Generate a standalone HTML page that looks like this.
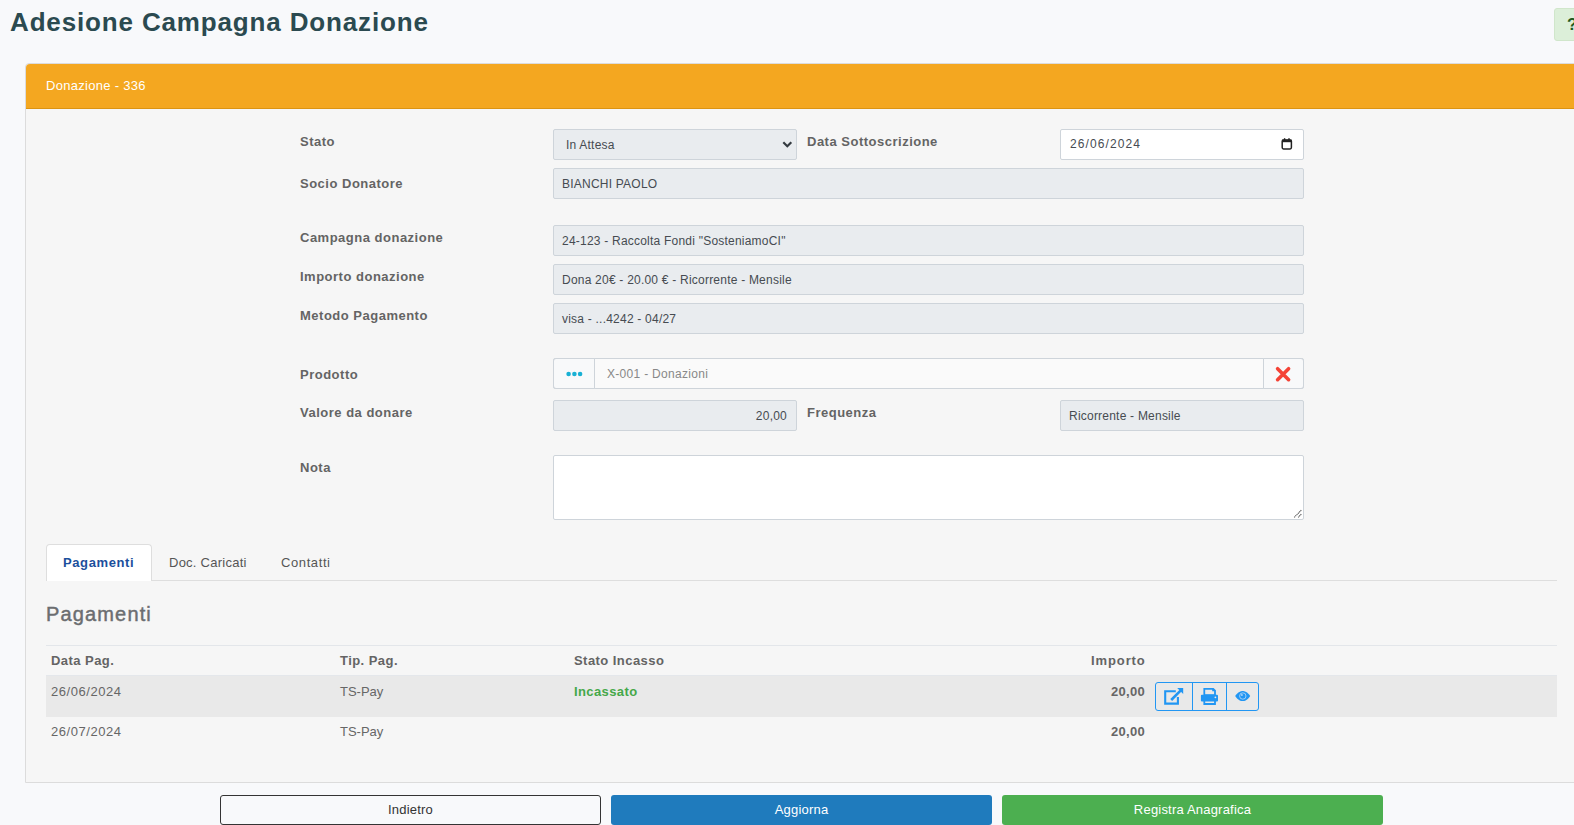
<!DOCTYPE html>
<html><head><meta charset="utf-8">
<style>
html,body{margin:0;padding:0;}
body{width:1574px;height:825px;overflow:hidden;background:#f8f9fb;font-family:"Liberation Sans",sans-serif;position:relative;color:#555;}
.a{position:absolute;white-space:nowrap;}
h1{position:absolute;margin:0;left:10px;top:9px;font-size:26px;line-height:26px;font-weight:bold;color:#2b4a50;letter-spacing:0.85px;white-space:nowrap;}
.help{position:absolute;left:1554px;top:8px;width:40px;height:33px;background:#dcefd9;border:1px solid #d0e6cb;border-radius:3px;box-sizing:border-box;}
.help span{position:absolute;left:12px;top:7px;font-size:17px;line-height:17px;font-weight:bold;color:#1f5a1f;}
.panel{position:absolute;left:25px;top:63px;width:1600px;height:720px;background:#f6f6f6;border:1px solid #dcdcdc;border-radius:4px 0 0 0;box-sizing:border-box;}
.ph{position:absolute;left:26px;top:64px;width:1600px;height:45px;background:#f4a720;border-bottom:1px solid #dc9412;border-radius:4px 0 0 0;box-sizing:border-box;}
.ph span{position:absolute;left:20px;top:15px;font-size:13px;line-height:13px;color:#fff;letter-spacing:0.3px;}
.lbl{position:absolute;left:300px;font-size:13px;line-height:13px;font-weight:bold;color:#646464;letter-spacing:0.5px;white-space:nowrap;}
.inp{position:absolute;box-sizing:border-box;background:#e9ecef;border:1px solid #ced4da;border-radius:2px;height:31px;}
.inp span{position:absolute;left:8px;top:9px;font-size:12px;line-height:12px;color:#464b51;white-space:nowrap;letter-spacing:0.22px;}
.white{background:#fff;}
.tab{position:absolute;top:556px;font-size:13px;line-height:13px;color:#555;white-space:nowrap;letter-spacing:0.45px;}
.th{position:absolute;top:654px;font-size:13px;line-height:13px;font-weight:bold;color:#646464;white-space:nowrap;letter-spacing:0.45px;}
.td{position:absolute;font-size:13px;line-height:13px;color:#666;white-space:nowrap;letter-spacing:0.55px;}
.btn{position:absolute;top:795px;width:381px;height:30px;border-radius:3px;box-sizing:border-box;font-size:13px;line-height:30px;text-align:center;letter-spacing:0.2px;}
</style></head><body>
<h1>Adesione Campagna Donazione</h1>
<div class="help"><span>?</span></div>

<div class="panel"></div>
<div class="ph"><span>Donazione - 336</span></div>

<div class="lbl" style="top:135px">Stato</div>
<div class="inp" style="left:553px;top:129px;width:244px;"><span style="left:12px">In Attesa</span>
<svg style="position:absolute;left:228px;top:10px" width="11" height="9" viewBox="0 0 11 9"><path d="M1.3 2.3 L5.3 6.3 L9.3 2.3" stroke="#343a40" stroke-width="2.2" fill="none"/></svg></div>
<div class="lbl" style="left:807px;top:135px">Data Sottoscrizione</div>
<div class="inp white" style="left:1060px;top:129px;width:244px;"><span style="top:8px;left:9px;letter-spacing:1.1px;">26/06/2024</span>
<svg style="position:absolute;left:220px;top:7px" width="12" height="13" viewBox="0 0 12 13"><rect x="1.2" y="2.9" width="9.2" height="9" rx="1.3" fill="none" stroke="#222" stroke-width="1.5"/><rect x="1" y="2.6" width="9.6" height="2.6" fill="#222"/><rect x="2.9" y="1.2" width="1.4" height="2" fill="#222"/><rect x="7.3" y="1.2" width="1.4" height="2" fill="#222"/></svg></div>

<div class="lbl" style="top:177px">Socio Donatore</div>
<div class="inp" style="left:553px;top:168px;width:751px;"><span>BIANCHI PAOLO</span></div>

<div class="lbl" style="top:231px">Campagna donazione</div>
<div class="inp" style="left:553px;top:225px;width:751px;"><span>24-123 - Raccolta Fondi "SosteniamoCI"</span></div>

<div class="lbl" style="top:270px">Importo donazione</div>
<div class="inp" style="left:553px;top:264px;width:751px;"><span>Dona 20€ - 20.00 € - Ricorrente - Mensile</span></div>

<div class="lbl" style="top:309px">Metodo Pagamento</div>
<div class="inp" style="left:553px;top:303px;width:751px;"><span>visa - ...4242 - 04/27</span></div>

<div class="lbl" style="top:368px">Prodotto</div>
<div class="inp" style="left:553px;top:358px;width:751px;background:#fafafa;"><span style="left:53px;color:#888;top:9px;letter-spacing:0.3px;">X-001 - Donazioni</span></div>
<div class="a" style="left:553px;top:358px;width:42px;height:31px;background:#f8f9fa;border:1px solid #ced4da;border-radius:3px 0 0 3px;box-sizing:border-box;"></div>
<svg class="a" style="left:564px;top:369px" width="22" height="10" viewBox="0 0 22 10"><circle cx="4.6" cy="5" r="2.3" fill="#18b0d4"/><circle cx="10.4" cy="5" r="2.3" fill="#18b0d4"/><circle cx="16.1" cy="5" r="2.3" fill="#18b0d4"/></svg>
<div class="a" style="left:1263px;top:358px;width:41px;height:31px;background:#f8f9fa;border:1px solid #ced4da;border-radius:0 3px 3px 0;box-sizing:border-box;"></div>
<svg class="a" style="left:1274px;top:366px" width="18" height="17" viewBox="0 0 18 17"><path d="M3.6 2.7 L14.6 13.7 M14.6 2.7 L3.6 13.7" stroke="#f44336" stroke-width="3.6" stroke-linecap="round"/></svg>

<div class="lbl" style="top:406px">Valore da donare</div>
<div class="inp" style="left:553px;top:400px;width:244px;"><span style="left:auto;right:9px">20,00</span></div>
<div class="lbl" style="left:807px;top:406px">Frequenza</div>
<div class="inp" style="left:1060px;top:400px;width:244px;"><span>Ricorrente - Mensile</span></div>

<div class="lbl" style="top:461px">Nota</div>
<div class="inp white" style="left:553px;top:455px;width:751px;height:65px;">
<svg style="position:absolute;right:1px;bottom:1px" width="9" height="9" viewBox="0 0 9 9"><path d="M8.3 1.2 L1.2 8.3 M8.3 5.2 L5.2 8.3" stroke="#555" stroke-width="1.1" stroke-dasharray="1.2 0.6"/></svg></div>

<!-- tabs -->
<div class="a" style="left:46px;top:580px;width:1511px;height:1px;background:#dedede;"></div>
<div class="a" style="left:46px;top:544px;width:106px;height:37px;background:#fff;border:1px solid #dedede;border-bottom:none;border-radius:4px 4px 0 0;box-sizing:border-box;"></div>
<div class="tab" style="left:63px;color:#1b4f9c;font-weight:bold;letter-spacing:0.6px;">Pagamenti</div>
<div class="tab" style="left:169px;letter-spacing:0.25px;">Doc. Caricati</div>
<div class="tab" style="left:281px;letter-spacing:0.6px;">Contatti</div>

<div class="a" style="left:46px;top:604px;font-size:20px;line-height:20px;color:#6b6d70;letter-spacing:1.15px;-webkit-text-stroke:0.45px #6b6d70;">Pagamenti</div>
<div class="a" style="left:46px;top:645px;width:1511px;height:1px;background:#e3e6ea;"></div>

<div class="th" style="left:51px;">Data Pag.</div>
<div class="th" style="left:340px;">Tip. Pag.</div>
<div class="th" style="left:574px;">Stato Incasso</div>
<div class="th" style="left:1091px;letter-spacing:0.9px;">Importo</div>

<div class="a" style="left:46px;top:675px;width:1511px;height:42px;background:#e9e9e9;border-top:1px solid #e4e7eb;box-sizing:border-box;"></div>
<div class="td" style="left:51px;top:685px;">26/06/2024</div>
<div class="td" style="left:340px;top:685px;letter-spacing:0;">TS-Pay</div>
<div class="td" style="left:574px;top:685px;color:#45a849;font-weight:bold;letter-spacing:0.4px;">Incassato</div>
<div class="td" style="left:1111px;top:685px;font-weight:bold;letter-spacing:0.3px;">20,00</div>

<div class="a" style="left:1155px;top:682px;width:104px;height:29px;border:1px solid #2196f3;border-radius:3px;box-sizing:border-box;"></div>
<div class="a" style="left:1192px;top:682px;width:1px;height:29px;background:#2196f3;"></div>
<div class="a" style="left:1226px;top:682px;width:1px;height:29px;background:#2196f3;"></div>
<svg class="a" style="left:1155px;top:682px" width="104" height="29" viewBox="0 0 104 29">
 <path d="M20.8 9.2 H10.2 V21.6 H22.9 V15" fill="none" stroke="#2196f3" stroke-width="2.1"/>
 <path d="M16.2 18 L26.3 7.9" stroke="#2196f3" stroke-width="2.6"/>
 <path d="M22.2 6 H28.2 V12 Z" fill="#2196f3"/>
  <path d="M48.4 6 H58.6 L60.9 8.3 V13 H48.4 Z M50.2 7.8 V12.2 H59.1 V9.2 H57.2 V7.8 Z" fill="#2196f3" fill-rule="evenodd"/>
 <rect x="45.9" y="12.8" width="17.1" height="6.6" rx="1" fill="#2196f3"/>
 <circle cx="60.4" cy="15.3" r="0.9" fill="#e9e9e9"/>
 <path d="M48.4 18 H60.9 V23 H48.4 Z M50.2 19.1 V21.1 H59.1 V19.1 Z" fill="#2196f3" fill-rule="evenodd"/>
 <path d="M80.2 14 C83 9.6 86 8.9 87.7 8.9 C89.4 8.9 92.4 9.6 95.2 14 C92.4 18.4 89.4 19.1 87.7 19.1 C86 19.1 83 18.4 80.2 14 Z" fill="#2196f3"/>
 <circle cx="87.8" cy="14" r="3.2" fill="none" stroke="#a9d3f7" stroke-width="0.9"/>
 <circle cx="86.9" cy="13.1" r="1" fill="#a9d3f7"/>
</svg>

<div class="td" style="left:51px;top:725px;">26/07/2024</div>
<div class="td" style="left:340px;top:725px;letter-spacing:0;">TS-Pay</div>
<div class="td" style="left:1111px;top:725px;font-weight:bold;letter-spacing:0.3px;">20,00</div>

<!-- bottom buttons -->
<div class="btn" style="left:220px;background:#f8f9fb;border:1px solid #343434;color:#333;line-height:28px;">Indietro</div>
<div class="btn" style="left:611px;background:#1f7bbd;color:#fff;">Aggiorna</div>
<div class="btn" style="left:1002px;background:#4caf50;color:#fff;">Registra Anagrafica</div>
</body></html>
